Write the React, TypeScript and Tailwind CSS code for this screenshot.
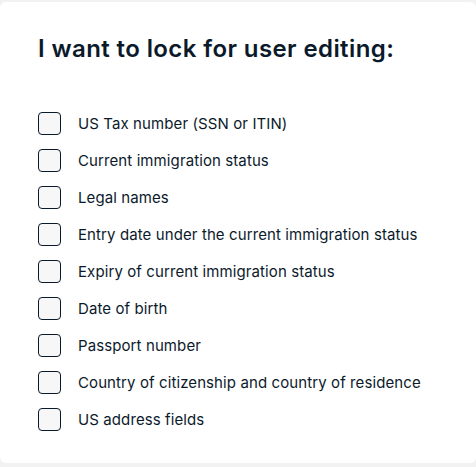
const items = [
  "US Tax number (SSN or ITIN)",
  "Current immigration status",
  "Legal names",
  "Entry date under the current immigration status",
  "Expiry of current immigration status",
  "Date of birth",
  "Passport number",
  "Country of citizenship and country of residence",
  "US address fields",
];

export default function App() {
  return (
    <div className="h-[467px] w-[476px] bg-[#f2f2f2] pt-[2px] pb-[4px] font-['Inter',sans-serif] text-[#0b1a2b]">
      <div className="h-full rounded-[6px] bg-white px-[38px] pt-[31px]">
        <h2 className="text-[24px] font-semibold leading-[32px] tracking-[0.4px]">I want to lock for user editing:</h2>
        <div className="mt-[47px] flex flex-col gap-[14px]">
          {items.map((item) => (
            <label key={item} className="flex items-center gap-[17px]">
              <span className="h-[23px] w-[23px] shrink-0 rounded-[4px] border border-[#0b1a2b] bg-[#f7f7f7]" />
              <span className="text-[15px] leading-[23px] tracking-[0.1px]">{item}</span>
            </label>
          ))}
        </div>
      </div>
    </div>
  );
}
